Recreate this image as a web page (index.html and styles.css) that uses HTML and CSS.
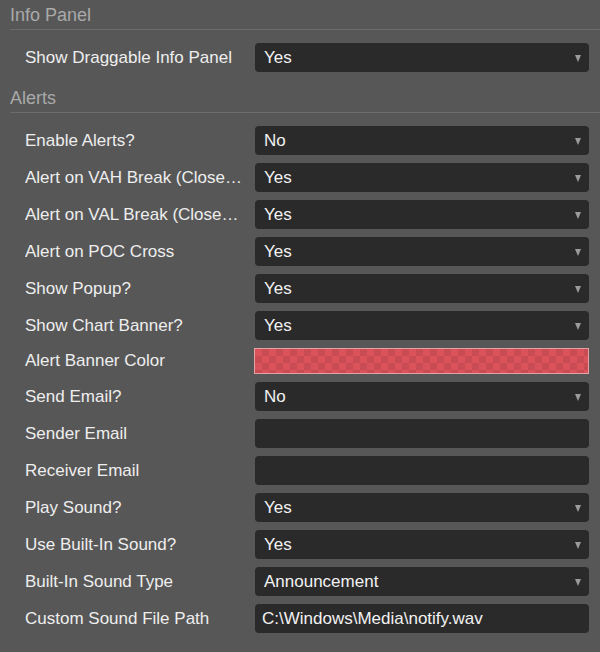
FILE: index.html
```html
<!DOCTYPE html>
<html>
<head>
<meta charset="utf-8">
<link rel="stylesheet" href="styles.css">
</head>
<body>
<div class="panel">
  <div class="section-title first">Info Panel</div>
  <div class="rows">
    <div class="row"><div class="label">Show Draggable Info Panel</div><div class="select">Yes</div></div>
  </div>
  <div class="section-title">Alerts</div>
  <div class="rows">
    <div class="row"><div class="label">Enable Alerts?</div><div class="select">No</div></div>
    <div class="row"><div class="label">Alert on VAH Break (Close…</div><div class="select">Yes</div></div>
    <div class="row"><div class="label">Alert on VAL Break (Close…</div><div class="select">Yes</div></div>
    <div class="row"><div class="label">Alert on POC Cross</div><div class="select">Yes</div></div>
    <div class="row"><div class="label">Show Popup?</div><div class="select">Yes</div></div>
    <div class="row"><div class="label">Show Chart Banner?</div><div class="select">Yes</div></div>
    <div class="row row-color"><div class="label">Alert Banner Color</div><div class="swatch"></div></div>
    <div class="row"><div class="label">Send Email?</div><div class="select">No</div></div>
    <div class="row"><div class="label">Sender Email</div><div class="input"></div></div>
    <div class="row"><div class="label">Receiver Email</div><div class="input"></div></div>
    <div class="row"><div class="label">Play Sound?</div><div class="select">Yes</div></div>
    <div class="row"><div class="label">Use Built-In Sound?</div><div class="select">Yes</div></div>
    <div class="row"><div class="label">Built-In Sound Type</div><div class="select">Announcement</div></div>
    <div class="row"><div class="label">Custom Sound File Path</div><div class="input">C:\Windows\Media\notify.wav</div></div>
  </div>
</div>
</body>
</html>
```
FILE: styles.css
```css
html, body {
  margin: 0;
  padding: 0;
  background: #575757;
  font-family: "Liberation Sans", Arial, sans-serif;
  font-size: 17px;
  color: #ececec;
}
.panel {
  padding-left: 10px;
}
.section-title {
  font-size: 18px;
  line-height: 20px;
  color: #a9a9a9;
  padding: 5px 0 4px 0;
  border-bottom: 1px solid #6c6c6c;
  margin-top: 11px;
}
.section-title.first {
  margin-top: 0;
}
.rows {
  display: flex;
  flex-direction: column;
  gap: 8px;
  padding: 13px 11px 0 15px;
}
.row {
  display: grid;
  grid-template-columns: 230px 1fr;
  align-items: center;
}
.label {
  width: 224px;
  white-space: nowrap;
  overflow: hidden;
  text-overflow: ellipsis;
  line-height: 20px;
  color: #eeeeee;
}
.select, .input {
  height: 29px;
  box-sizing: border-box;
  background: #2a2a2a;
  border-radius: 4px;
  line-height: 29px;
  color: #f2f2f2;
  white-space: nowrap;
}
.select {
  position: relative;
  padding-left: 9px;
}
.select::after {
  content: "";
  position: absolute;
  right: 8px;
  top: 12px;
  border-left: 3.5px solid transparent;
  border-right: 3.5px solid transparent;
  border-top: 7px solid #9c9c9c;
}
.input {
  padding-left: 7px;
}
.swatch {
  height: 26px;
  box-sizing: border-box;
  margin-left: -1px;
  border: 1px solid #e3a3a5;
  background-color: #da535b;
  background-image:
    linear-gradient(45deg, #c94c54 25%, transparent 25%, transparent 75%, #c94c54 75%),
    linear-gradient(45deg, #c94c54 25%, transparent 25%, transparent 75%, #c94c54 75%);
  background-size: 14px 14px;
  background-position: 0 0, 7px 7px;
}
```
